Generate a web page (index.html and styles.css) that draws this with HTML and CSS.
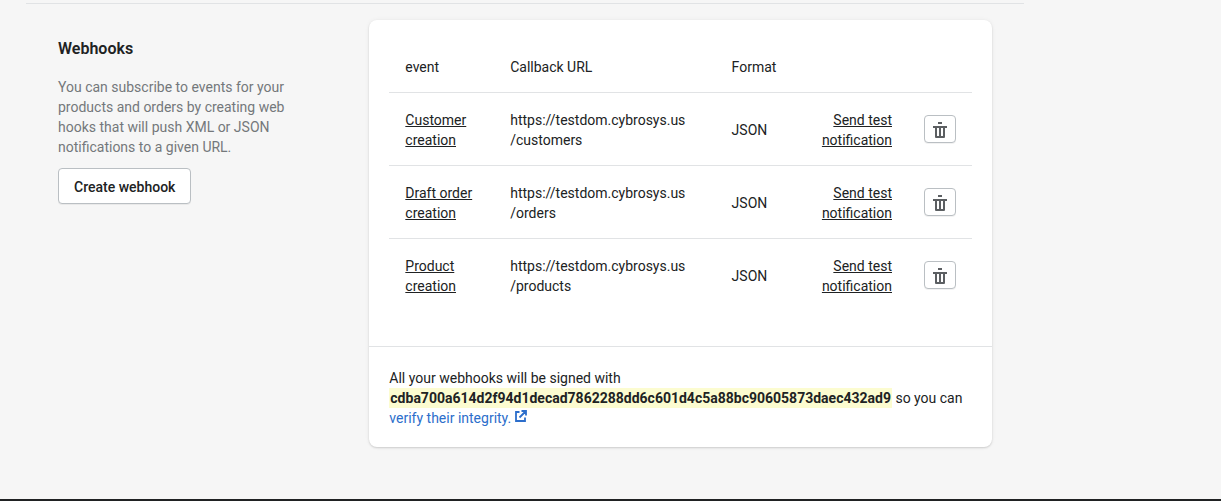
FILE: index.html
```html
<!DOCTYPE html>
<html lang="en">
<head>
<meta charset="utf-8">
<meta name="viewport" content="width=device-width, initial-scale=1">
<title>Webhooks</title>
<link rel="stylesheet" href="styles.css">
</head>
<body>
<svg class="sprite" aria-hidden="true">
  <symbol id="icon-trash" viewBox="0 0 14 16">
    <path fill-rule="evenodd" d="M5 0h4v2H5zM0 4h14v2h-2v9a1 1 0 0 1-1 1H3a1 1 0 0 1-1-1V6H0zM4 6v8h2V6zM8 6v8h2V6z"/>
  </symbol>
</svg>
<main class="page">
  <section class="settings">
    <div class="intro">
      <h2 class="intro-title">Webhooks</h2>
      <p class="intro-text">You can subscribe to events for your products and orders by creating web hooks that will push XML or JSON notifications to a given URL.</p>
      <button class="button" type="button">Create webhook</button>
    </div>
    <div class="card">
      <div class="card-table">
        <table class="webhooks">
          <thead>
            <tr><th class="col-event" scope="col">event</th><th class="col-url" scope="col">Callback URL</th><th class="col-format" scope="col">Format</th><td class="col-test"></td><td class="col-delete"></td></tr>
          </thead>
          <tbody>
            <tr>
              <td><a class="link" href="#customer">Customer creation</a></td>
              <td>https://testdom.cybrosys.us<wbr>/customers</td>
              <td>JSON</td>
              <td class="col-test"><a class="link" href="#test-customer">Send test notification</a></td>
              <td class="col-delete"><button class="icon-button" type="button" aria-label="Delete customer creation webhook"><svg class="trash"><use href="#icon-trash"/></svg></button></td>
            </tr>
            <tr>
              <td><a class="link" href="#draft">Draft order creation</a></td>
              <td>https://testdom.cybrosys.us<wbr>/orders</td>
              <td>JSON</td>
              <td class="col-test"><a class="link" href="#test-draft">Send test notification</a></td>
              <td class="col-delete"><button class="icon-button" type="button" aria-label="Delete draft order creation webhook"><svg class="trash"><use href="#icon-trash"/></svg></button></td>
            </tr>
            <tr>
              <td><a class="link" href="#product">Product creation</a></td>
              <td>https://testdom.cybrosys.us<wbr>/products</td>
              <td>JSON</td>
              <td class="col-test"><a class="link" href="#test-product">Send test notification</a></td>
              <td class="col-delete"><button class="icon-button" type="button" aria-label="Delete product creation webhook"><svg class="trash"><use href="#icon-trash"/></svg></button></td>
            </tr>
          </tbody>
        </table>
      </div>
      <p class="card-note">All your webhooks will be signed with <strong class="secret">cdba700a614d2f94d1decad7862288dd6c601d4c5a88bc90605873daec432ad9</strong> so you can <a class="external" href="#verify">verify their integrity.<svg class="external-icon" viewBox="0 0 12 12" aria-hidden="true"><path d="M4.500 2H1v9h9V7.500M6.500 1H11v4.500M11 1L4.500 7.500" fill="none" stroke="currentColor" stroke-width="1.800"/></svg></a></p>
    </div>
  </section>
</main>
<footer class="bottom-bar"></footer>
</body>
</html>
```
FILE: styles.css
```css
* { box-sizing: border-box; }
body {
  margin: 0;
  min-height: 100vh;
  display: flex;
  flex-direction: column;
  background: #f6f6f6;
  color: #202223;
  font: 400 14px/20px Roboto, sans-serif;
}
.sprite { position: absolute; width: 0; height: 0; }
.page {
  flex: 1;
  width: 100%;
  max-width: 1050px;
  padding: 3px 26px 52px;
}
.settings {
  display: grid;
  grid-template-columns: minmax(0, 1fr) minmax(0, 2fr);
  align-items: start;
  padding: 16px 32px 0;
  border-top: 1px solid #e1e3e5;
}
.intro { padding: 17px 60px 0 0; }
.intro-title { margin: 0; font-size: 16px; line-height: 24px; font-weight: 600; }
.intro-text { margin: 16px 0 11px; color: #74787b; }
.button {
  height: 36px;
  padding: 1px 15px 0;
  border: 1px solid #babfc3;
  border-radius: 4px;
  background: #fff;
  box-shadow: 0 1px 0 rgba(0, 0, 0, .05);
  color: #202223;
  font: 500 14px/20px Roboto, sans-serif;
}
.card {
  background: #fff;
  border-radius: 8px;
  box-shadow: 0 0 5px rgba(23, 24, 24, .05), 0 1px 2px rgba(0, 0, 0, .15);
}
.card-table { padding: 20px 20px 35px; }
.webhooks { width: 100%; table-layout: fixed; border-collapse: separate; border-spacing: 0; }
.webhooks th, .webhooks td { padding: 17px 16px 15px; text-align: left; font-weight: 400; vertical-align: middle; }
.webhooks tbody td { border-top: 1px solid #e1e3e5; }
.col-event { width: 18%; }
.col-url { width: 38%; }
.col-format { width: 15%; }
.webhooks .col-test { text-align: right; }
.webhooks .col-delete { width: 64px; padding-top: 16px; padding-bottom: 16px; }
.link { color: inherit; text-decoration: underline; }
.icon-button {
  display: flex;
  align-items: center;
  justify-content: center;
  width: 32px;
  height: 28px;
  padding: 2px 0 0;
  border: 1px solid #babfc3;
  border-radius: 4px;
  background: #fff;
  box-shadow: 0 1px 0 rgba(0, 0, 0, .05);
  color: #5c5f62;
}
.trash { width: 14px; height: 16px; fill: currentColor; }
.card-note { margin: 0; padding: 21px 20px 19px; border-top: 1px solid #e1e3e5; }
.secret { padding: 2px 1px; background: #fcfcd0; font-weight: 700; }
.external { color: #2c6ecb; text-decoration: none; }
.external-icon { width: 12px; height: 12px; margin: 0 0 1px 4px; }
.bottom-bar { height: 2px; background: #202223; }
```
